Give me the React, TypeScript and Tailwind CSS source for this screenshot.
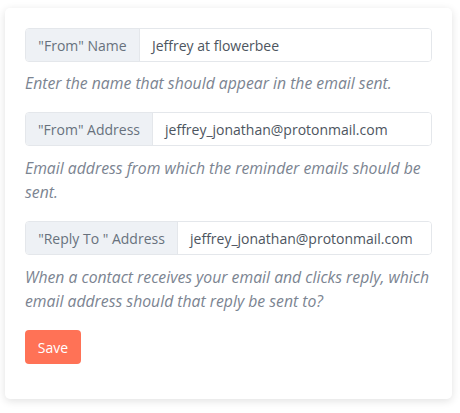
import React from "react";

function Group({ label, value, labelW }: { label: string; value: string; labelW: string }) {
  return (
    <div className="flex h-[34px] w-full rounded-[4px] border border-[#e4e7eb] overflow-hidden">
      <div className={`flex items-center justify-center bg-[#eef1f5] border-r border-[#e4e7eb] text-[#68717d] ${labelW}`}>
        {label}
      </div>
      <div className="flex flex-1 items-center pl-[12px] bg-white text-[#4d5560]">{value}</div>
    </div>
  );
}

export default function App() {
  return (
    <div className="min-h-[413px] bg-white pt-[8px] pl-[5px]" style={{ fontFamily: '"Open Sans", sans-serif' }}>
      <div className="w-[447px] rounded-[5px] bg-white px-[20px] pt-[20px] pb-[35px] shadow-[0_2px_8px_rgba(0,0,0,0.12)] text-[14px]">
        <Group label={'"From" Name'} value="Jeffrey at flowerbee" labelW="w-[114px]" />
        <p className="mt-[9px] mb-[17px] text-[15.75px] leading-[24px] italic text-[#7b8491]">
          Enter the name that should appear in the email sent.
        </p>
        <Group label={'"From" Address'} value="jeffrey_jonathan@protonmail.com" labelW="w-[127px]" />
        <p className="mt-[10px] mb-[17px] text-[15.75px] leading-[24px] italic text-[#7b8491]">
          Email address from which the reminder emails should be sent.
        </p>
        <Group label={'"Reply To " Address'} value="jeffrey_jonathan@protonmail.com" labelW="w-[152px]" />
        <p className="mt-[10px] mb-[17px] text-[15.75px] leading-[24px] italic text-[#7b8491]">
          When a contact receives your email and clicks reply, which email address should that reply be sent to?
        </p>
        <button className="h-[34px] w-[56px] rounded-[4px] bg-[#ff7256] text-white text-[14px]">Save</button>
      </div>
    </div>
  );
}
